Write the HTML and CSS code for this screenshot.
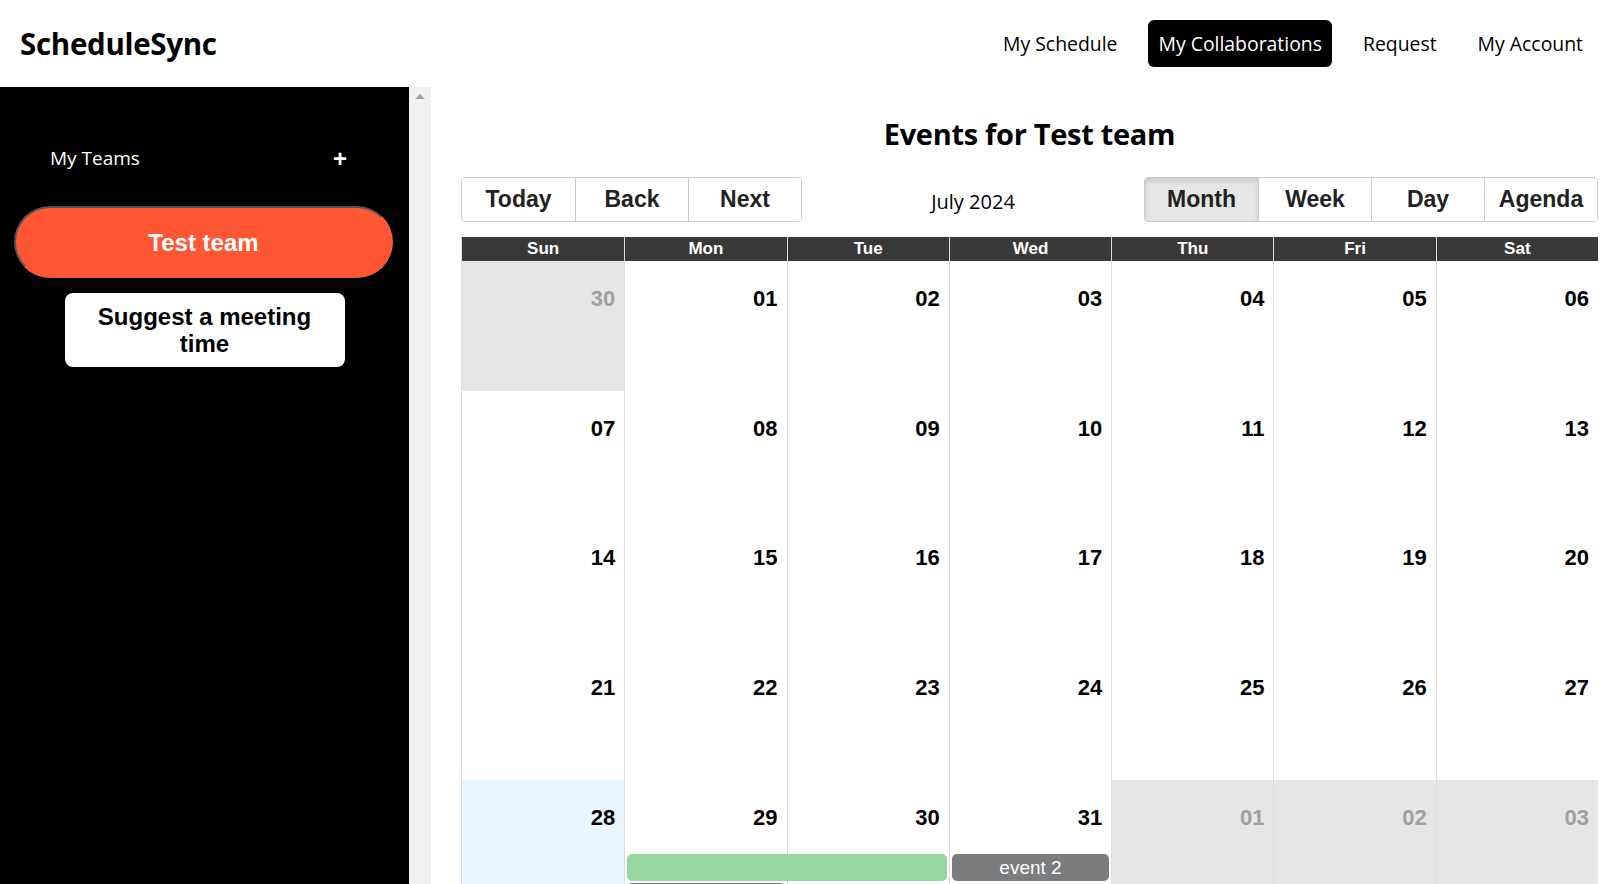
FILE: index.html
```html
<!DOCTYPE html>
<html lang="en">
<head>
<meta charset="utf-8">
<title>ScheduleSync</title>
<link rel="stylesheet" href="styles.css">
</head>
<body>
<header class="topbar">
  <div class="brand">ScheduleSync</div>
  <nav class="nav">
    <a class="nav-link">My Schedule</a>
    <a class="nav-link active">My Collaborations</a>
    <a class="nav-link">Request</a>
    <a class="nav-link">My Account</a>
  </nav>
</header>
<div class="app">
  <aside class="sidebar">
    <div class="teams-head">
      <span>My Teams</span>
      <span class="plus">+</span>
    </div>
    <button class="team-btn">Test team</button>
    <button class="suggest-btn">Suggest a meeting time</button>
  </aside>
  <div class="scroll-track"><span class="arrow-up"></span></div>
  <main class="content">
    <h1 class="page-title">Events for Test team</h1>
    <div class="toolbar">
      <div class="btn-group">
        <button class="tb-btn">Today</button>
        <button class="tb-btn">Back</button>
        <button class="tb-btn">Next</button>
      </div>
      <div class="label">July 2024</div>
      <div class="btn-group">
        <button class="tb-btn active">Month</button>
        <button class="tb-btn">Week</button>
        <button class="tb-btn">Day</button>
        <button class="tb-btn">Agenda</button>
      </div>
    </div>
    <div class="month">
      <div class="head-row">
        <div class="head-cell">Sun</div>
        <div class="head-cell">Mon</div>
        <div class="head-cell">Tue</div>
        <div class="head-cell">Wed</div>
        <div class="head-cell">Thu</div>
        <div class="head-cell">Fri</div>
        <div class="head-cell">Sat</div>
      </div>

      <div class="week">
        <div class="bg off"></div><div class="bg"></div><div class="bg"></div><div class="bg"></div><div class="bg"></div><div class="bg"></div><div class="bg"></div>
        <div class="date off-date">30</div><div class="date">01</div><div class="date">02</div><div class="date">03</div><div class="date">04</div><div class="date">05</div><div class="date">06</div>
      </div>
      <div class="week">
        <div class="bg"></div><div class="bg"></div><div class="bg"></div><div class="bg"></div><div class="bg"></div><div class="bg"></div><div class="bg"></div>
        <div class="date">07</div><div class="date">08</div><div class="date">09</div><div class="date">10</div><div class="date">11</div><div class="date">12</div><div class="date">13</div>
      </div>
      <div class="week">
        <div class="bg"></div><div class="bg"></div><div class="bg"></div><div class="bg"></div><div class="bg"></div><div class="bg"></div><div class="bg"></div>
        <div class="date">14</div><div class="date">15</div><div class="date">16</div><div class="date">17</div><div class="date">18</div><div class="date">19</div><div class="date">20</div>
      </div>
      <div class="week">
        <div class="bg"></div><div class="bg"></div><div class="bg"></div><div class="bg"></div><div class="bg"></div><div class="bg"></div><div class="bg"></div>
        <div class="date">21</div><div class="date">22</div><div class="date">23</div><div class="date">24</div><div class="date">25</div><div class="date">26</div><div class="date">27</div>
      </div>
      <div class="week">
        <div class="bg today"></div><div class="bg"></div><div class="bg"></div><div class="bg"></div><div class="bg off"></div><div class="bg off"></div><div class="bg off"></div>
        <div class="date">28</div><div class="date">29</div><div class="date">30</div><div class="date">31</div><div class="date off-date">01</div><div class="date off-date">02</div><div class="date off-date">03</div>
        <div class="event green ev-r1 c2-3"></div>
        <div class="event grey ev-r1 c4">event 2</div>
        <div class="event grey ev-r2 c2"></div>
      </div>
    </div>
  </main>
</div>
</body>
</html>
```

FILE: styles.css
```css
* { box-sizing: border-box; }
html, body { margin: 0; height: 100%; overflow: hidden; }
body { background: #fff; color: #000; font-family: "Open Sans", "Liberation Sans", sans-serif; }

.topbar {
  height: 87px;
  display: flex;
  align-items: center;
  justify-content: space-between;
  padding: 0 7px 0 20px;
}
.brand { font-size: 29.5px; font-weight: 700; letter-spacing: -0.3px; }
.nav { display: flex; align-items: center; gap: 21px; }
.nav-link {
  font-size: 19.4px;
  padding: 10px 10px;
  border-radius: 6px;
  color: #000;
  line-height: 27px;
}
.nav-link.active { background: #000; color: #fff; }

.app { display: flex; height: 797px; }
.sidebar { width: 409px; background: #000; color: #fff; flex: none; display: flex; flex-direction: column; }
.scroll-track { width: 22px; background: #f1f1f1; flex: none; display: flex; justify-content: center; padding-top: 7px; }
.arrow-up { width: 0; height: 0; border-left: 5px solid transparent; border-right: 5px solid transparent; border-bottom: 5px solid #a3a3a3; }

.teams-head {
  display: flex;
  justify-content: space-between;
  align-items: center;
  padding: 58px 62px 0 50px;
  font-size: 19px;
  line-height: 27px;
}
.plus { font-family: "Liberation Sans", sans-serif; font-weight: 700; font-size: 24px; }
.team-btn {
  margin: 34px 16px 0 14px;
  height: 72px;
  background: #ff5733;
  color: #fff;
  border: 2px solid;
  border-color: #555 #ff5733 #ff5733 #555;
  border-radius: 36px;
  font-family: "Liberation Sans", Arial, sans-serif;
  font-size: 24px;
  font-weight: 700;
  padding-top: 3px;
}
.suggest-btn {
  align-self: center;
  margin-top: 15px;
  width: 280px;
  height: 74px;
  background: #fff;
  color: #000;
  border: none;
  border-radius: 8px;
  padding: 0 20px;
  font-family: "Liberation Sans", Arial, sans-serif;
  font-size: 24px;
  font-weight: 700;
  line-height: 27px;
}

.content { flex: 1; padding: 0 2px 0 30px; min-width: 0; }
.page-title { margin: 27px 0 0; text-align: center; font-size: 29px; font-weight: 700; line-height: 40px; letter-spacing: -0.3px; }
.toolbar { display: flex; align-items: center; margin-top: 23px; height: 45px; }
.label { flex: 1; text-align: center; font-size: 20px; padding-top: 4px; }
.btn-group { display: flex; border: 1px solid #ccc; border-radius: 4px; overflow: hidden; }
.tb-btn {
  width: 113px;
  height: 43px;
  background: #fff;
  border: none;
  border-left: 1px solid #ccc;
  font-family: "Liberation Sans", Arial, sans-serif;
  font-size: 23px;
  font-weight: 700;
  color: #222;
}
.tb-btn:first-child { border-left: none; }
.tb-btn.active { background: #e6e6e6; box-shadow: inset 0 3px 5px rgba(0,0,0,0.125); }

.month { margin-top: 15px; border-left: 1px solid #ddd; font-family: "Liberation Sans", Arial, sans-serif; }
.head-row { display: grid; grid-template-columns: repeat(7, 1fr); height: 24px; background: #393939; }
.head-cell { color: #fff; font-weight: 700; font-size: 17px; text-align: center; line-height: 24px; border-left: 1px solid #ddd; }
.head-cell:first-child { border-left: none; }

.week {
  display: grid;
  grid-template-columns: repeat(7, 1fr);
  grid-template-rows: 74px 29px 29px 1fr;
  height: 129.7px;
  border-bottom: 1px solid #ddd;
}
.bg { grid-row: 1 / -1; border-left: 1px solid #ddd; background: #fff; }
.bg:first-child { border-left: none; }
.bg:nth-child(1) { grid-column: 1; }
.bg:nth-child(2) { grid-column: 2; }
.bg:nth-child(3) { grid-column: 3; }
.bg:nth-child(4) { grid-column: 4; }
.bg:nth-child(5) { grid-column: 5; }
.bg:nth-child(6) { grid-column: 6; }
.bg:nth-child(7) { grid-column: 7; }
.bg.off { background: #e6e6e6; }
.bg.today { background: #eaf6ff; }
.date { grid-row: 1; text-align: right; padding: 25px 9px 0 0; font-size: 22px; font-weight: 700; line-height: 26px; }
.date:nth-child(8) { grid-column: 1; }
.date:nth-child(9) { grid-column: 2; }
.date:nth-child(10) { grid-column: 3; }
.date:nth-child(11) { grid-column: 4; }
.date:nth-child(12) { grid-column: 5; }
.date:nth-child(13) { grid-column: 6; }
.date:nth-child(14) { grid-column: 7; }
.date.off-date { color: #a0a0a0; }

.event { margin: 0 2px 2px 3px; border-radius: 5px; color: #fff; font-size: 19px; text-align: center; line-height: 27px; height: 27px; }
.ev-r1 { grid-row: 2; }
.ev-r2 { grid-row: 3; }
.c2-3 { grid-column: 2 / 4; }
.c4 { grid-column: 4; }
.c2 { grid-column: 2; }
.green { background: #98d6a0; }
.grey { background: #7a7c7e; }
```
